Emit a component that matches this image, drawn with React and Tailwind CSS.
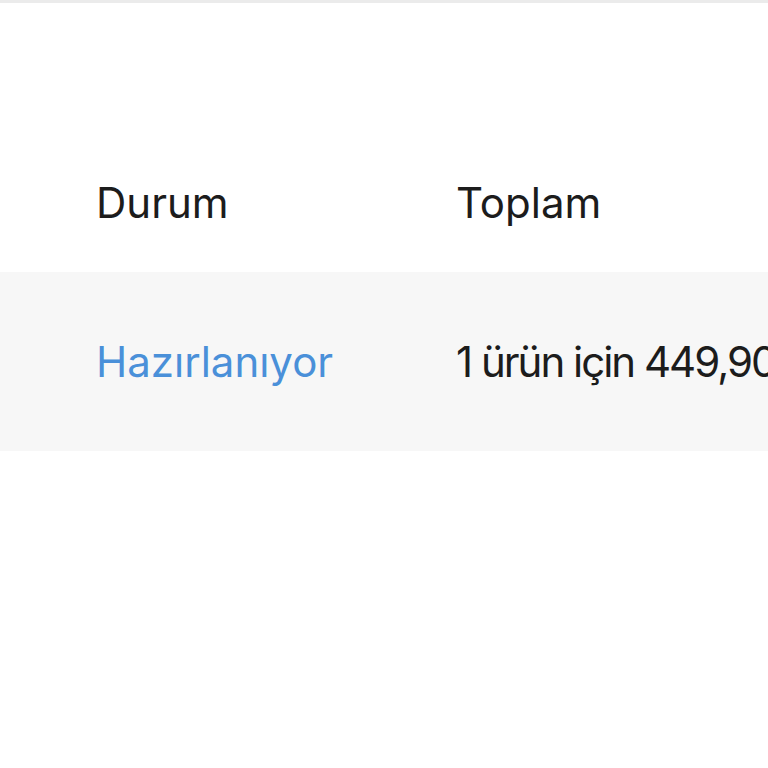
import React from 'react';

const App = () => {
    return (
        <div className="w-full h-[768px] overflow-hidden bg-white">
            {/* Top border line */}
            <div className="border-t-[3px] border-[#ebebeb]"></div>

            <div className="mt-[130px] font-['Inter',sans-serif] text-[42px] whitespace-nowrap">
                {/* Header row */}
                <div className="flex items-center h-[139px] pl-[96px] text-[#1c1c1c]">
                    <div className="w-[360px] shrink-0">Durum</div>
                    <div className="shrink-0">Toplam</div>
                </div>

                {/* Order row */}
                <div className="flex items-center h-[179px] pl-[96px] bg-[#f7f7f7]">
                    <div className="w-[360px] shrink-0 text-[#4a90d9]">Hazırlanıyor</div>
                    <div className="shrink-0 text-[#1c1c1c] tracking-[-2px]">1 ürün için 449,90 TL</div>
                </div>
            </div>
        </div>
    );
};

export default App;
